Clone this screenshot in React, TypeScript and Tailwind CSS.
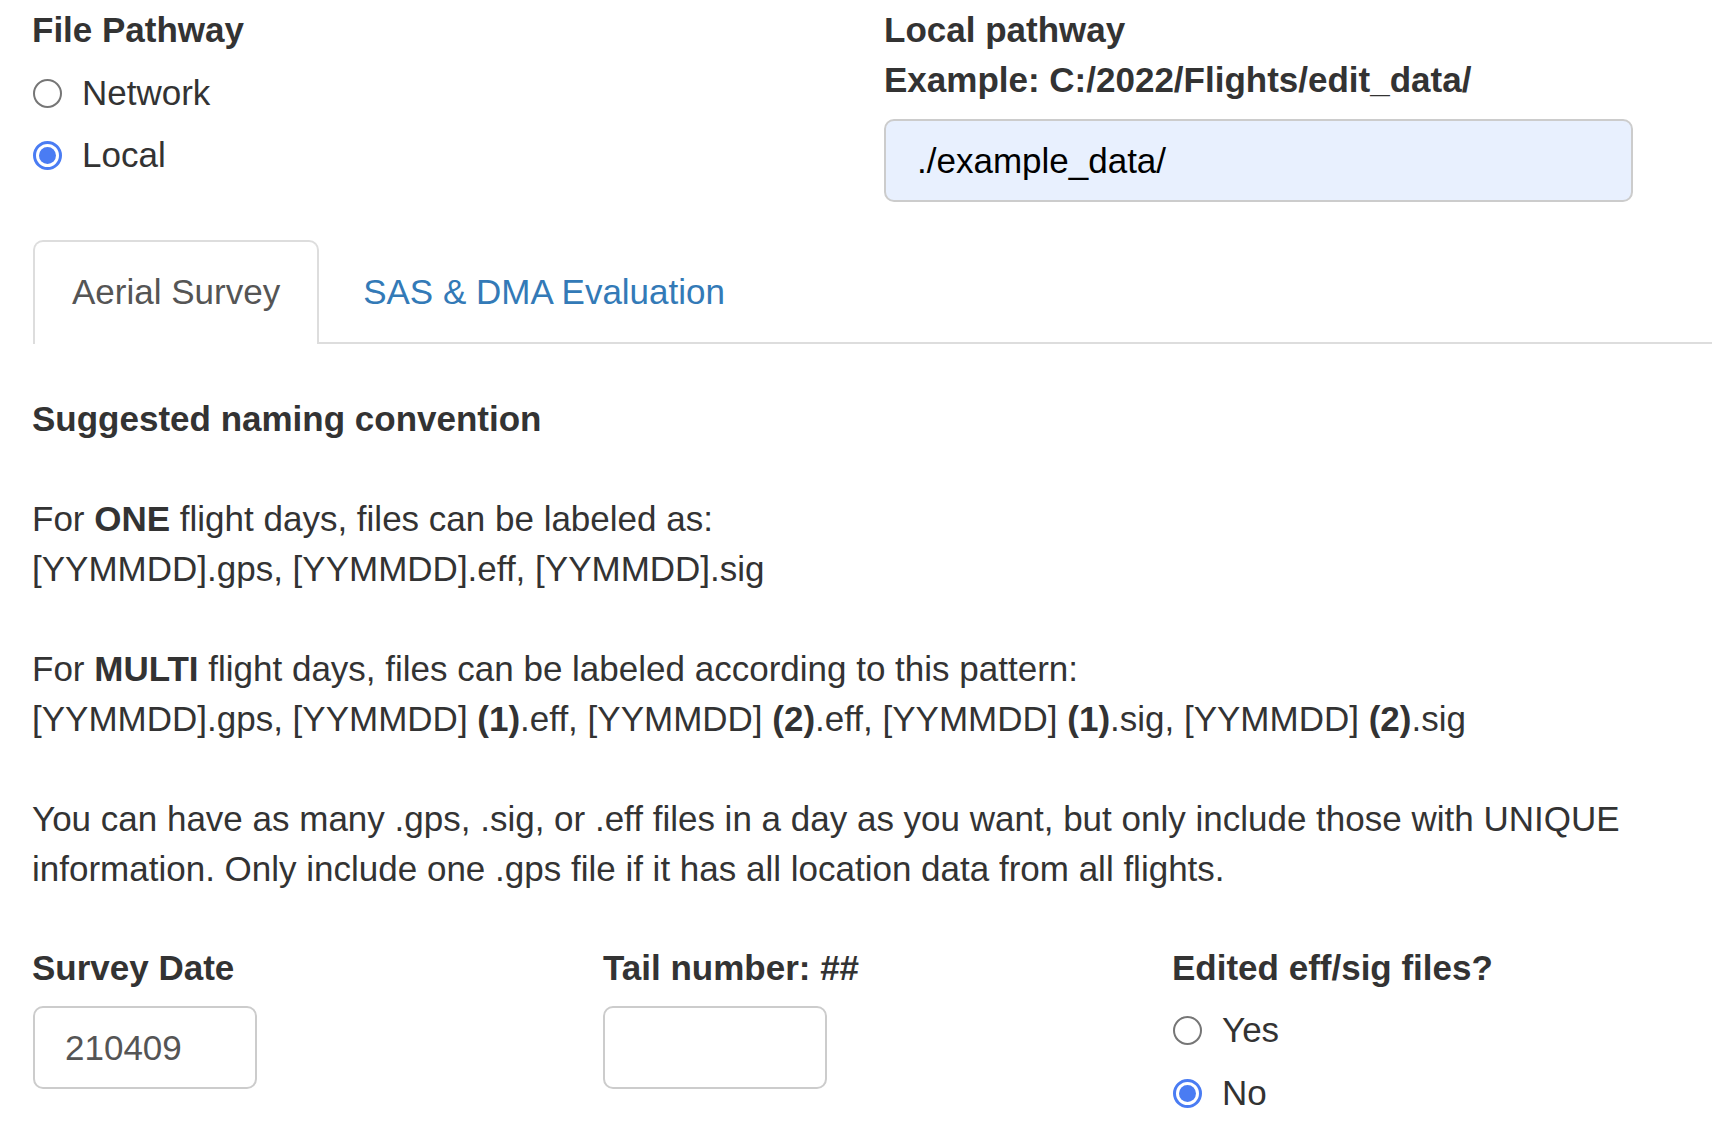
import React from "react";

function Radio({ checked, label }: { checked?: boolean; label: string }) {
  return (
    <div className="flex items-center h-[50px]">
      <span
        className={
          checked
            ? "ml-[1px] w-[29px] h-[29px] rounded-full flex items-center justify-center shrink-0 border-[3px] border-[#4a7cf3] bg-white"
            : "ml-[1px] w-[29px] h-[29px] rounded-full flex items-center justify-center shrink-0 border-[2.5px] border-[#767676] bg-white"
        }
      >
        {checked && <span className="w-[17px] h-[17px] rounded-full bg-[#4a7cf3]" />}
      </span>
      <span className="ml-[20px]">{label}</span>
    </div>
  );
}

export default function App() {
  return (
    <div className="w-[1715px] h-[1140px] overflow-hidden bg-white text-[#333] font-['Liberation_Sans',Arial,sans-serif] text-[35px] leading-[50px]">
      {/* Top row */}
      <div className="grid grid-cols-[884px_1fr] pt-[5px]">
        <div className="pl-[32px]">
          <div className="font-bold">File Pathway</div>
          <div className="mt-[13px] flex flex-col gap-[12px]">
            <Radio label="Network" />
            <Radio label="Local" checked />
          </div>
        </div>
        <div>
          <div className="font-bold">
            Local pathway
            <br />
            Example: C:/2022/Flights/edit_data/
          </div>
          <div className="mt-[14px] w-[749px] h-[83px] border-2 border-[#ccc] rounded-[10px] bg-[#e8f0fe] flex items-center pl-[31px] text-black">
            ./example_data/
          </div>
        </div>
      </div>

      {/* Tabs */}
      <div className="mt-[38px] ml-[33px] mr-[3px] flex border-b-2 border-[#ddd]">
        <div className="-mb-[2px] border-2 border-b-0 border-[#ddd] rounded-t-[10px] bg-white px-[37px] pt-[25px] pb-[27px] text-[#555]">
          Aerial Survey
        </div>
        <div className="ml-[5px] px-[39px] pt-[27px] pb-[25px] text-[#337ab7]">
          SAS &amp; DMA Evaluation
        </div>
      </div>

      {/* Content */}
      <div className="pl-[32px] pr-[30px] mt-[50px]">
        <div className="font-bold">Suggested naming convention</div>
        <div className="mt-[50px]">
          For <b>ONE</b> flight days, files can be labeled as:
          <br />
          [YYMMDD].gps, [YYMMDD].eff, [YYMMDD].sig
        </div>
        <div className="mt-[50px]">
          For <b>MULTI</b> flight days, files can be labeled according to this pattern:
          <br />
          [YYMMDD].gps, [YYMMDD] <b>(1)</b>.eff, [YYMMDD] <b>(2)</b>.eff, [YYMMDD] <b>(1)</b>.sig, [YYMMDD]{" "}
          <b>(2)</b>.sig
        </div>
        <div className="mt-[50px]">
          You can have as many .gps, .sig, or .eff files in a day as you want, but only include those with UNIQUE
          <br />
          information. Only include one .gps file if it has all location data from all flights.
        </div>
      </div>

      {/* Bottom row */}
      <div className="grid grid-cols-[571px_569px_1fr] pl-[32px] mt-[49px]">
        <div>
          <div className="font-bold">Survey Date</div>
          <div className="mt-[13px] ml-[1px] w-[224px] h-[83px] border-2 border-[#ccc] rounded-[10px] bg-white flex items-center pl-[30px] text-[#555]">
            210409
          </div>
        </div>
        <div>
          <div className="font-bold">Tail number: ##</div>
          <div className="mt-[13px] w-[224px] h-[83px] border-2 border-[#ccc] rounded-[10px] bg-white" />
        </div>
        <div>
          <div className="font-bold">Edited eff/sig files?</div>
          <div className="mt-[12px] flex flex-col gap-[13px]">
            <Radio label="Yes" />
            <Radio label="No" checked />
          </div>
        </div>
      </div>
    </div>
  );
}
